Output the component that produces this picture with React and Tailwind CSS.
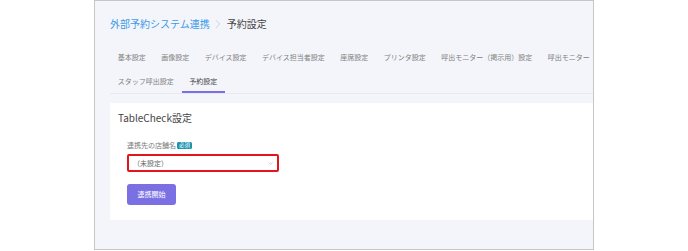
import { ChevronDown, ChevronRight } from "lucide-react";

const row1 = [
    "基本設定",
    "画像設定",
    "デバイス設定",
    "デバイス担当者設定",
    "座席設定",
    "プリンタ設定",
    "呼出モニター（掲示用）設定",
    "呼出モニター（受付用）設定",
];

const row2 = ["スタッフ呼出設定", "予約設定"];

function Tab({ label, active }) {
    return (
        <div
            className={
                "shrink-0 px-[7.75px] h-[24px] leading-[24px] text-[7px] whitespace-nowrap " +
                (active
                    ? "text-[#444] border-b-2 border-[#7b6fe2] -mb-px"
                    : "text-[#808080]")
            }
        >
            {label}
        </div>
    );
}

export default function App() {
    return (
        <div
            className="w-[688px] h-[251px] bg-white"
            style={{ fontFamily: '"Noto Sans CJK JP", "Noto Sans", sans-serif' }}
        >
            <div className="ml-[94px] w-[500px] h-[250px] border border-[#c6c6c6] bg-[#f4f5fa] overflow-hidden pl-[15px]">
                {/* breadcrumb */}
                <div className="pt-[16px] flex items-center h-[30px] leading-[14px] text-[10px]">
                    <span className="text-[#3a9ae8]">外部予約システム連携</span>
                    <ChevronRight className="w-[14px] h-[14px] ml-[1px] mr-[2px] text-[#c0c0c0]" strokeWidth={1.2} />
                    <span className="text-[#444]">予約設定</span>
                </div>

                {/* tabs */}
                <div className="mt-[14px] border-b border-[#e9e9ef] w-[600px]">
                    <div className="flex">
                        {row1.map((t) => (
                            <Tab key={t} label={t} />
                        ))}
                    </div>
                    <div className="flex">
                        {row2.map((t) => (
                            <Tab key={t} label={t} active={t === "予約設定"} />
                        ))}
                    </div>
                </div>

                {/* card */}
                <div className="mt-[9px] bg-white w-[520px] pl-[8px] pt-[8px] pb-[15px]">
                    <div className="text-[10px] leading-[14px] text-[#444]">TableCheck設定</div>

                    <div className="ml-[9px] mt-[15px]">
                        <div className="flex items-center h-[10px] leading-[10px]">
                            <span className="text-[7px] text-[#7a7a7a]">連携先の店舗名</span>
                            <span className="ml-[1px] bg-[#1994ae] text-white text-[5.5px] h-[7px] leading-[7px] px-[2px] rounded-[1.5px]">
                                必須
                            </span>
                        </div>

                        <div className="mt-[4px] w-[152px] h-[18px] border-2 border-[#e3141c] rounded-[2px] flex items-center justify-between pl-[4px] pr-[3px]">
                            <span className="text-[7px] text-[#666]">（未設定）</span>
                            <ChevronDown className="w-[7px] h-[7px] text-[#888]" strokeWidth={1.5} />
                        </div>

                        <button className="mt-[12px] w-[49px] h-[21px] bg-[#7b70e3] rounded-[3px] text-white text-[7px] flex items-center justify-center">
                            連携開始
                        </button>
                    </div>
                </div>
            </div>
        </div>
    );
}
